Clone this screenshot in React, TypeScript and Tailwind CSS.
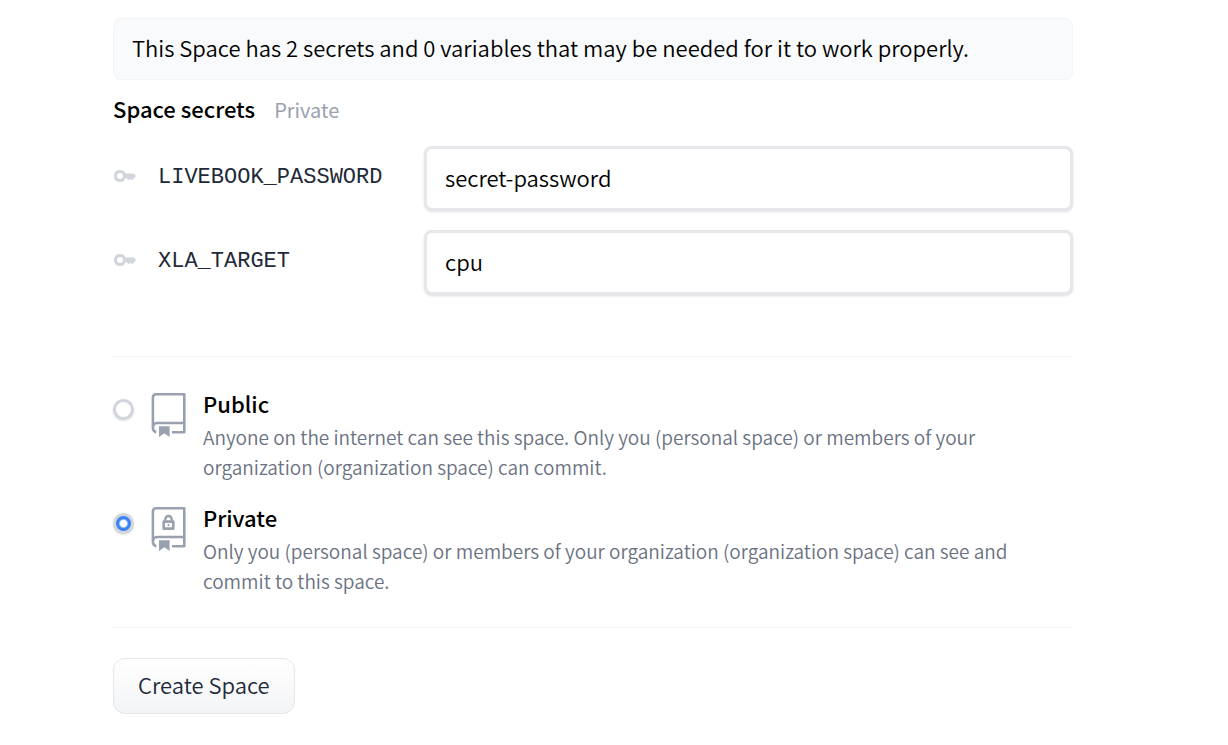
import { useState, type ReactNode } from "react";

function KeyIcon() {
  return (
    <svg viewBox="0 0 22 12" className="h-3 w-[22px] shrink-0 text-gray-300" fill="currentColor" aria-hidden="true">
      <path
        fillRule="evenodd"
        d="M6 0a6 6 0 0 1 5.7 3.6H20L22 6 20.2 8.3H19.4V9.8H17.2L16.4 8.6 15.5 9.8H13.4V8.3H11.5A6 6 0 1 1 6 0ZM6 3.1a2.9 2.9 0 1 0 0 5.8 2.9 2.9 0 0 0 0-5.8Z"
      />
    </svg>
  );
}

function RepoIcon({ locked = false }: { locked?: boolean }) {
  return (
    <svg viewBox="0 0 36 46" className="h-[46px] w-9 shrink-0 text-gray-400" fill="none" stroke="currentColor" strokeWidth="2.6" aria-hidden="true">
      <path strokeLinejoin="round" d="M6.4 40.2C4 39.7 2.9 38 2.9 35.8V5.5Q2.9 2.3 6.1 2.3H34.3V40.2H22M2.9 35.8C2.9 32.5 4.2 31 7.2 31H34" />
      <path d="M9 34.2H19.6V45L14.3 41.3 9 45Z" fill="currentColor" stroke="none" />
      {locked && (
        <>
          <path d="M13.7 15.6H23.3V22.6H13.7Z" strokeWidth="2.6" strokeLinejoin="round" />
          <path d="M15.3 15V13.2A3.2 3.2 0 0 1 21.7 13.2V15" strokeWidth="2.4" />
          <circle cx="18.5" cy="19.1" r="1.1" fill="currentColor" stroke="none" />
        </>
      )}
    </svg>
  );
}

function SecretRow({ name, initial }: { name: string; initial: string }) {
  const [value, setValue] = useState(initial);
  return (
    <div className="flex items-center">
      <label htmlFor={name} className="flex w-[311px] shrink-0 items-center gap-[22px] pb-[6px] pl-px">
        <KeyIcon />
        <span className="pt-1 font-['Liberation_Mono',monospace] text-[22px] leading-8 text-gray-800">{name}</span>
      </label>
      <input
        id={name}
        type="text"
        value={value}
        onChange={(e) => setValue(e.target.value)}
        className="h-[65px] min-w-0 flex-1 rounded-lg border-3 border-gray-200 bg-white px-[18px] pb-1 text-[22px] text-black shadow-sm outline-none"
      />
    </div>
  );
}

type OptionProps = {
  id: string;
  title: string;
  checked: boolean;
  onSelect: () => void;
  children: ReactNode;
};

function VisibilityOption({ id, title, checked, onSelect, children }: OptionProps) {
  return (
    <label htmlFor={id} className="flex items-start">
      <input
        id={id}
        type="radio"
        name="visibility"
        checked={checked}
        onChange={onSelect}
        aria-label={title}
        className="mt-3 h-[21px] w-[21px] shrink-0 appearance-none rounded-full border-3 border-gray-300 bg-white shadow-sm checked:bg-blue-500 checked:bg-[radial-gradient(circle,white_0_3px,#3b82f6_5px)]"
      />
      <span className="mt-[5px] ml-4 flex">
        <RepoIcon locked={id === "private"} />
      </span>
      <span className="ml-[17px] flex flex-col gap-[3px]">
        <span className="text-[22px] leading-8 font-medium text-black">{title}</span>
        <span className="text-[19px] leading-[30px] text-gray-500">{children}</span>
      </span>
    </label>
  );
}

export default function App() {
  const [visibility, setVisibility] = useState("private");
  return (
    <main className="bg-white pt-[18px] pr-[155px] pb-8 pl-[113px] font-['Noto_Sans_CJK_SC',sans-serif] text-[22px] leading-8 font-[350] text-black">
      <p className="rounded-lg border border-gray-100 bg-gray-50 px-[18px] pt-3 pb-4">
        This Space has 2 secrets and 0 variables that may be needed for it to work properly.
      </p>
      <h2 className="mt-3 flex items-baseline gap-[19px]">
        <span className="font-medium">Space secrets</span>
        <span className="text-[20px] font-normal text-gray-400">Private</span>
      </h2>
      <div className="mt-5 flex flex-col gap-[19px]">
        <SecretRow name="LIVEBOOK_PASSWORD" initial="secret-password" />
        <SecretRow name="XLA_TARGET" initial="cpu" />
      </div>
      <hr className="mt-[61px] border-gray-100" />
      <div className="mt-[30px] flex flex-col gap-[19px]">
        <VisibilityOption id="public" title="Public" checked={visibility === "public"} onSelect={() => setVisibility("public")}>
          Anyone on the internet can see this space. Only you (personal space) or members of your organization
          (organization space) can commit.
        </VisibilityOption>
        <VisibilityOption id="private" title="Private" checked={visibility === "private"} onSelect={() => setVisibility("private")}>
          Only you (personal space) or members of your organization (organization space) can see and commit to this
          space.
        </VisibilityOption>
      </div>
      <hr className="mt-[31px] border-gray-100" />
      <button
        type="button"
        className="mt-[30px] rounded-xl border border-gray-200 bg-linear-to-b from-white to-gray-100 px-6 pt-[9px] pb-[13px] text-gray-800"
      >
        Create Space
      </button>
    </main>
  );
}
